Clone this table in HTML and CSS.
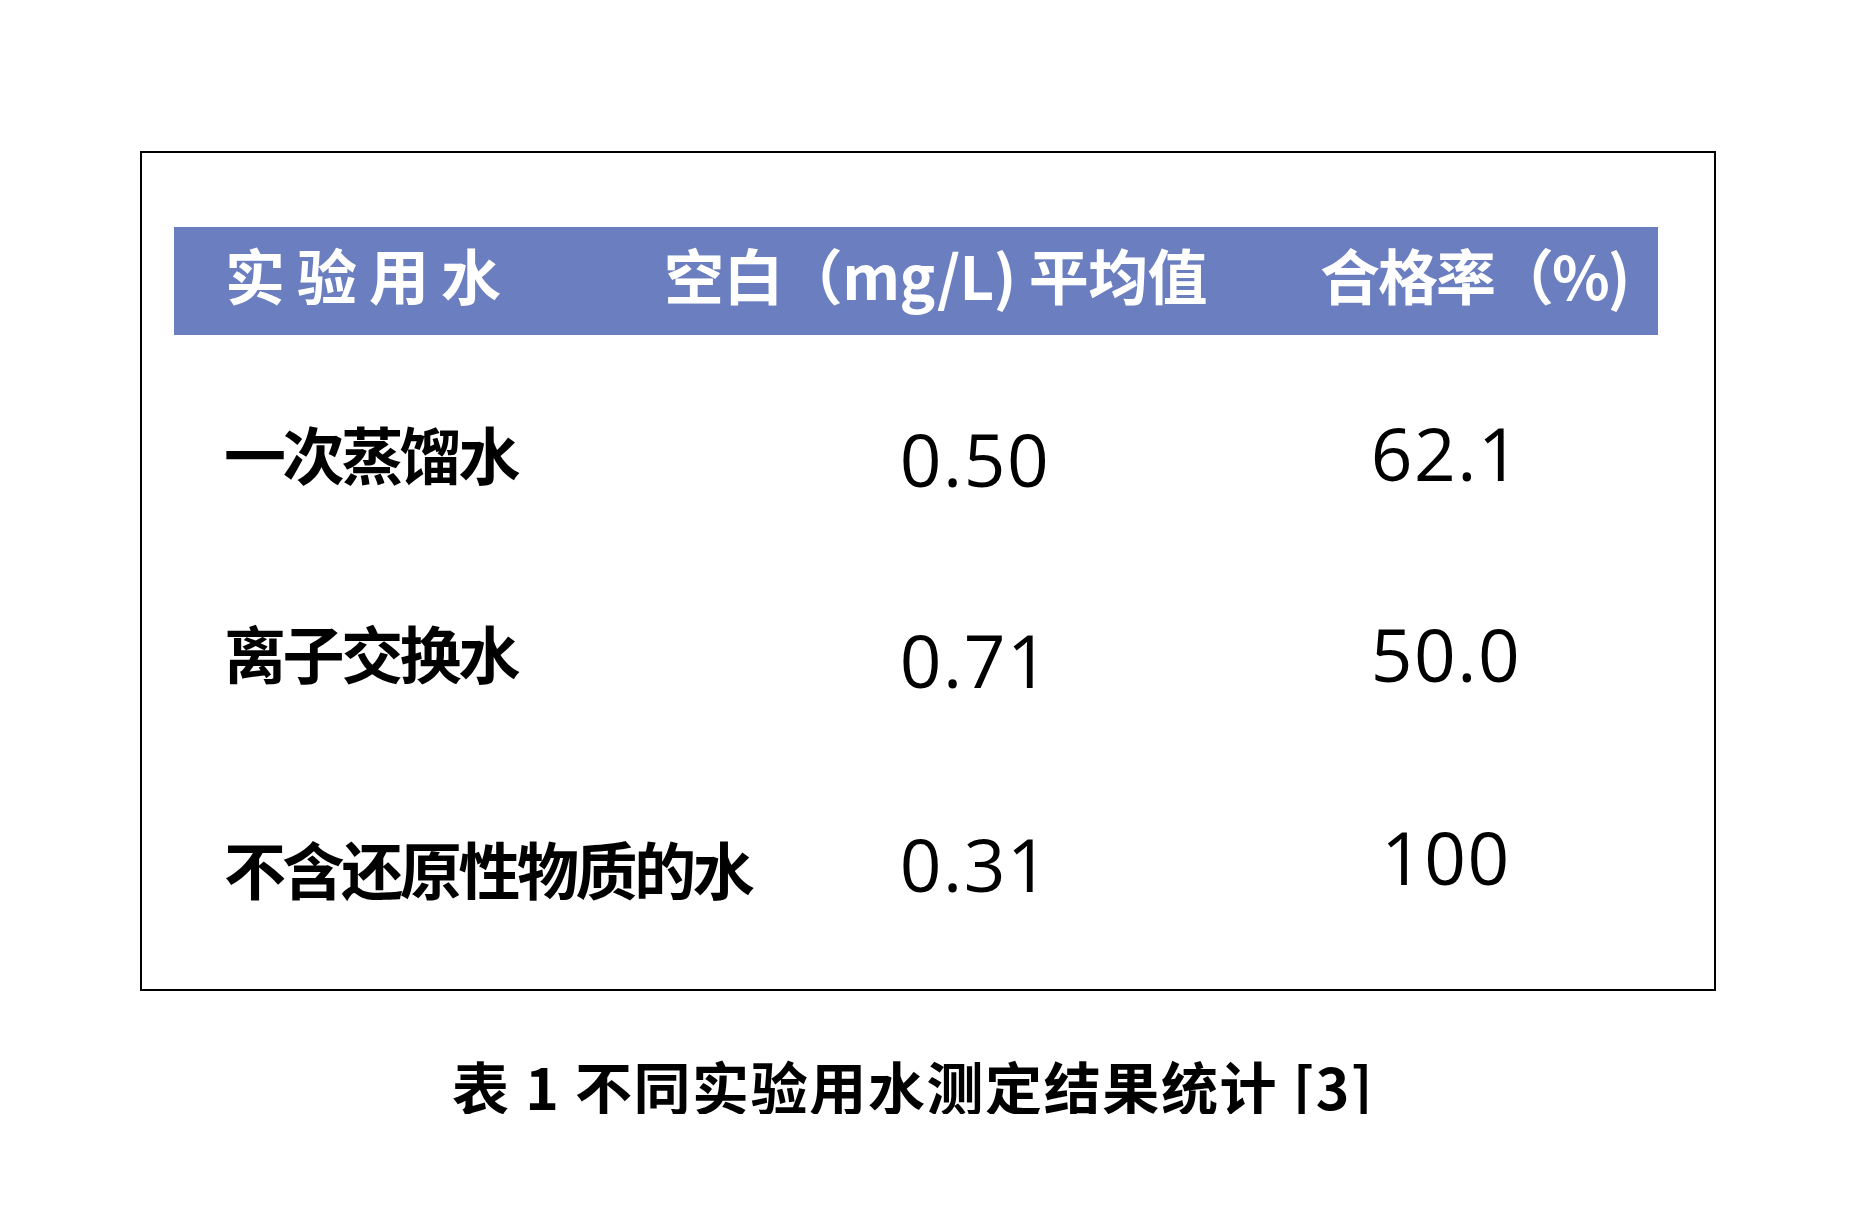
FILE: index.html
```html
<!DOCTYPE html>
<html lang="zh-CN">
<head>
<meta charset="utf-8">
<title>表1 不同实验用水测定结果统计</title>
<link rel="stylesheet" href="styles.css">
</head>
<body>
<div class="page">
  <div class="frame">
    <div class="head">
      <div class="h-col h-water">实验用水</div>
      <div class="h-col h-blank">空白（mg/L) 平均值</div>
      <div class="h-col h-rate">合格率（%)</div>
    </div>
    <div class="rows">
      <div class="row row-a">
        <div class="label">一次蒸馏水</div>
        <div class="num blank">0.50</div>
        <div class="num rate">62.1</div>
      </div>
      <div class="row row-b">
        <div class="label">离子交换水</div>
        <div class="num blank">0.71</div>
        <div class="num rate">50.0</div>
      </div>
      <div class="row row-c">
        <div class="label">不含还原性物质的水</div>
        <div class="num blank">0.31</div>
        <div class="num rate">100</div>
      </div>
    </div>
  </div>
  <div class="caption">表 1 不同实验用水测定结果统计 [3]</div>
</div>
</body>
</html>
```
FILE: styles.css
```css
html, body {
  margin: 0;
  padding: 0;
  background: #ffffff;
}

.page {
  padding: 151px 0 0 140px;
  font-family: "Noto Sans CJK SC", "Noto Sans", sans-serif;
}

.frame {
  box-sizing: border-box;
  width: 1576px;
  height: 840px;
  border: 2px solid #000000;
  padding: 74px 56px 0 32px;
}

.head {
  height: 108px;
  background: #6a7ec0;
  display: grid;
  grid-template-columns: 490px 656px 1fr;
  align-items: center;
  padding-bottom: 14px;
  box-sizing: border-box;
  color: #ffffff;
  font-weight: 700;
  font-size: 60px;
  line-height: 1;
}

.h-col {
  white-space: nowrap;
}

.h-water {
  padding-left: 51px;
  letter-spacing: 12px;
}

.h-blank {
  letter-spacing: -0.6px;
}

.h-rate {
  letter-spacing: -2px;
}

.rows {
  display: grid;
  grid-template-rows: 199px 216px auto;
  padding-top: 87px;
}

.row {
  display: grid;
  grid-template-columns: 601px 396px 446px;
  align-items: start;
}

.label {
  padding-left: 50px;
  font-weight: 700;
  font-size: 62px;
  letter-spacing: -3.4px;
  line-height: 1;
  color: #000000;
  white-space: nowrap;
}

.num {
  font-family: "Open Sans", "Noto Sans", sans-serif;
  font-size: 73px;
  letter-spacing: 1.5px;
  line-height: 1;
  color: #000000;
  text-align: center;
}

.blank {
  padding-left: 4px;
}

.rate {
  padding-left: 104px;
  margin-top: -6px;
}

.row-b .blank {
  margin-top: 2px;
}

.row-b .rate {
  margin-top: -4px;
}

.row-c .blank {
  margin-top: -10px;
}

.row-c .rate {
  margin-top: -17px;
}

.caption {
  margin-top: 66px;
  padding-left: 312px;
  font-weight: 700;
  font-size: 57px;
  letter-spacing: 1.6px;
  line-height: 1;
  color: #000000;
  white-space: nowrap;
}
```
